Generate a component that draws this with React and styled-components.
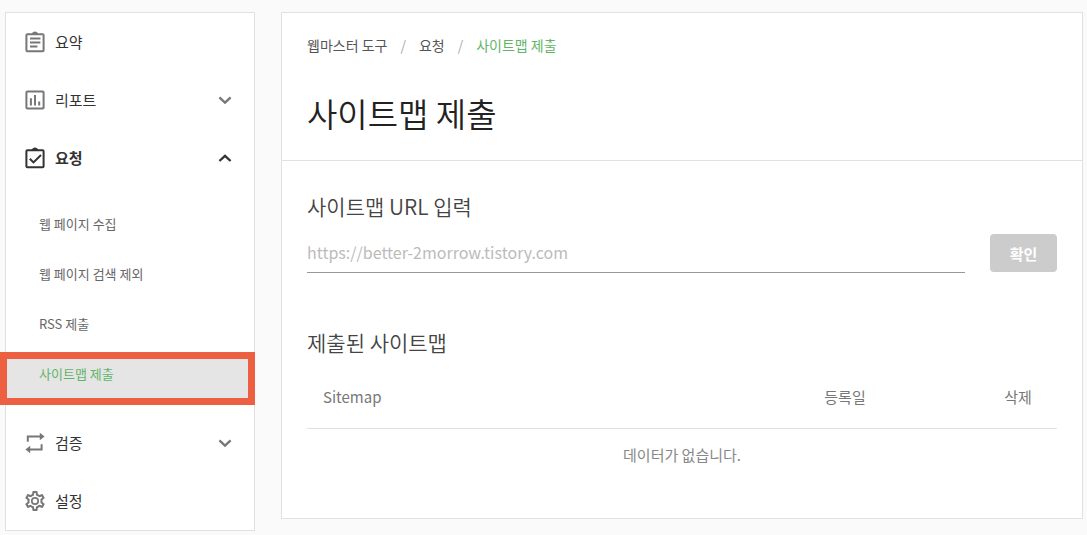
import React from "react"
import styled, { createGlobalStyle, css } from "styled-components"

const color = {
  page: "#fafafa",
  border: "#e1e1e1",
  text: "#333",
  gray: "#666",
  iconGray: "#777",
  green: "#62b565",
  red: "#ec5f40",
}

const GlobalStyle = createGlobalStyle`
  * {
    box-sizing: border-box;
  }
  body {
    margin: 0;
    background-color: ${color.page};
    color: ${color.text};
    font-family: "Noto Sans CJK KR", "Noto Sans", sans-serif;
  }
  a {
    color: inherit;
    text-decoration: none;
  }
`

const Page = styled.div`
  display: flex;
  align-items: flex-start;
  gap: 26px;
  padding: 12px 4px 3px 5px;
`

const Sidebar = styled.nav`
  flex: 0 0 250px;
  background-color: #fff;
  border: 1px solid ${color.border};
`

const List = styled.ul`
  list-style: none;
  margin: 0;
  padding: 0;
`

const SubList = styled(List)`
  padding: 11px 0 16px;
`

const menuRow = css`
  display: flex;
  align-items: center;
  gap: 10px;
  width: 100%;
  height: 58px;
  padding: 0 22px 0 19px;
  border: 0;
  background: none;
  font-family: inherit;
  font-size: 15px;
  font-weight: ${(props) => (props.$open ? 700 : 400)};
  line-height: 20px;
  color: ${color.text};
  text-align: left;
  cursor: pointer;
  svg {
    flex: none;
    color: ${(props) => (props.$open ? color.text : color.iconGray)};
  }
`

const MenuLink = styled.a`
  ${menuRow}
`

const MenuButton = styled.button`
  ${menuRow}
`

const MenuLabel = styled.span`
  flex: 1;
`

const SubLink = styled.a`
  position: relative;
  z-index: 0;
  display: flex;
  align-items: center;
  height: 50px;
  padding-left: 33px;
  font-size: 13px;
  color: ${(props) => (props.$active ? color.green : color.gray)};
  ${(props) =>
    props.$active &&
    css`
      &::before {
        content: "";
        position: absolute;
        z-index: -1;
        top: 4px;
        right: -1px;
        bottom: -7px;
        left: -6px;
        border: 7px solid ${color.red};
        background-color: #e5e5e5;
      }
    `}
`

const Main = styled.main`
  flex: 1;
  min-width: 0;
  background-color: #fff;
  border: 1px solid ${color.border};
`

const Header = styled.header`
  padding: 22px 25px 23px;
  border-bottom: 1px solid ${color.border};
`

const Breadcrumb = styled.ol`
  display: flex;
  list-style: none;
  margin: 0;
  padding: 0;
  font-size: 14px;
  line-height: 20px;
  color: #555;
  li + li::before {
    content: "/";
    padding: 0 13px;
    color: #aaa;
  }
  [aria-current] {
    color: ${color.green};
  }
`

const Title = styled.h1`
  margin: 34px 0 0;
  font-size: 33px;
  line-height: 48px;
  font-weight: 350;
  color: #222;
`

const Content = styled.div`
  padding: 30px 25px 36px;
`

const sectionTitle = css`
  display: block;
  margin: 0;
  font-size: 21px;
  line-height: 30px;
  font-weight: 350;
  color: #444;
`

const FieldLabel = styled.label`
  ${sectionTitle}
`

const SectionTitle = styled.h2`
  ${sectionTitle}
`

const Form = styled.form`
  margin-bottom: 54px;
`

const FormRow = styled.div`
  display: flex;
  gap: 25px;
  margin-top: 13px;
`

const Input = styled.input`
  flex: 1;
  min-width: 0;
  height: 39px;
  padding: 0 0 2px;
  border: 0;
  border-bottom: 1px solid #999;
  border-radius: 0;
  background: none;
  font-family: inherit;
  font-size: 16px;
  color: ${color.text};
  outline: none;
  &::placeholder {
    color: #bbb;
    opacity: 1;
  }
`

const SubmitButton = styled.button`
  width: 67px;
  height: 38px;
  padding: 0;
  border: 0;
  border-radius: 4px;
  background-color: #ccc;
  color: #fff;
  font-family: inherit;
  font-size: 15px;
  font-weight: 700;
`

const Table = styled.table`
  width: 100%;
  margin-top: 9px;
  border-collapse: collapse;
  table-layout: fixed;
  font-size: 15px;
  line-height: 20px;
  th {
    height: 62px;
    padding: 0 16px;
    border-bottom: 1px solid ${color.border};
    font-weight: 400;
    color: #777;
  }
  th:first-child {
    text-align: left;
  }
  td {
    height: 54px;
    padding: 0;
    text-align: center;
    color: #888;
  }
`

const Icon = ({ children, size = 20, height = 22 }) => (
  <svg
    width={size}
    height={height}
    viewBox={`0 0 ${size} ${height}`}
    fill="none"
    stroke="currentColor"
    strokeWidth="2"
    aria-hidden="true"
  >
    {children}
  </svg>
)

const Clipboard = () => (
  <>
    <rect x="1.4" y="3.3" width="17.2" height="16.9" rx="1" />
    <path
      d="M6.6 3.2C7.2 1.6 8.4.6 10 .6s2.8 1 3.4 2.6z"
      fill="currentColor"
      stroke="none"
    />
  </>
)

const SummaryIcon = () => (
  <Icon>
    <Clipboard />
    <path d="M5 7.5h10.4M5 11.5h10.4M5 15.5h7.4" strokeWidth="1.8" />
  </Icon>
)

const ReportIcon = () => (
  <Icon>
    <rect x="1.4" y="2.4" width="17.2" height="17.2" rx="1" />
    <path d="M5.9 9.2v7.2M10 6v10.4M14.2 12.6v3.8" />
  </Icon>
)

const RequestIcon = () => (
  <Icon>
    <Clipboard />
    <path d="M4.8 11.8l3.7 3.6L16 8" />
  </Icon>
)

const VerifyIcon = () => (
  <Icon>
    <path d="M2.8 9.7V4.5H15M16.6 12.2v5.3H5" />
    <path
      d="M14.8.8l4.8 3.7-4.8 3.7zM5.2 13.8L.4 17.5l4.8 3.7z"
      fill="currentColor"
      stroke="none"
    />
  </Icon>
)

const SettingsIcon = () => (
  <Icon>
    <path
      transform="translate(-2 -1)"
      d="M19.43 12.98c.04-.32.07-.64.07-.98 0-.34-.03-.66-.07-.98l2.11-1.65c.19-.15.24-.42.12-.64l-2-3.46a.5.5 0 0 0-.61-.22l-2.49 1c-.52-.4-1.08-.73-1.69-.98l-.38-2.65A.488.488 0 0 0 14 2h-4c-.25 0-.46.18-.49.42l-.38 2.65c-.61.25-1.17.59-1.69.98l-2.49-1a.566.566 0 0 0-.18-.03c-.17 0-.34.09-.43.25l-2 3.46c-.13.22-.07.49.12.64l2.11 1.65c-.04.32-.07.65-.07.98 0 .33.03.66.07.98l-2.11 1.65c-.19.15-.24.42-.12.64l2 3.46a.5.5 0 0 0 .61.22l2.49-1c.52.4 1.08.73 1.69.98l.38 2.65c.03.24.24.42.49.42h4c.25 0 .46-.18.49-.42l.38-2.65c.61-.25 1.17-.59 1.69-.98l2.49 1c.06.02.12.03.18.03.17 0 .34-.09.43-.25l2-3.46c.12-.22.07-.49-.12-.64l-2.11-1.65zm-1.98-1.71c.04.31.05.52.05.73 0 .21-.02.43-.05.73l-.14 1.13.89.7 1.08.84-.7 1.21-1.27-.51-1.04-.42-.9.68c-.43.32-.84.56-1.25.73l-1.06.43-.16 1.13-.2 1.35h-1.4l-.19-1.35-.16-1.13-1.06-.43c-.43-.18-.83-.41-1.23-.71l-.91-.7-1.06.43-1.27.51-.7-1.21 1.08-.84.89-.7-.14-1.13c-.03-.31-.05-.54-.05-.74s.02-.43.05-.73l.14-1.13-.89-.7-1.08-.84.7-1.21 1.27.51 1.04.42.9-.68c.43-.32.84-.56 1.25-.73l1.06-.43.16-1.13.2-1.35h1.39l.19 1.35.16 1.13 1.06.43c.43.18.83.41 1.23.71l.91.7 1.06-.43 1.27-.51.7 1.21-1.07.85-.89.7.14 1.13z"
      fill="currentColor"
      stroke="none"
    />
    <circle cx="10" cy="11" r="3.2" strokeWidth="1.7" />
  </Icon>
)

const Chevron = ({ up }) => (
  <Icon size={14} height={14}>
    <path
      d={up ? "M1.4 10L7 4.8l5.6 5.2" : "M1.4 4.4L7 9.6l5.6-5.2"}
      strokeWidth="2.3"
    />
  </Icon>
)

const requestPages = [
  "웹 페이지 수집",
  "웹 페이지 검색 제외",
  "RSS 제출",
  "사이트맵 제출",
]

const current = "사이트맵 제출"

const App = () => {
  return (
    <>
      <GlobalStyle />
      <Page>
        <Sidebar>
          <List>
            <li>
              <MenuLink href="#">
                <SummaryIcon />
                <MenuLabel>요약</MenuLabel>
              </MenuLink>
            </li>
            <li>
              <MenuButton type="button" aria-expanded="false">
                <ReportIcon />
                <MenuLabel>리포트</MenuLabel>
                <Chevron />
              </MenuButton>
            </li>
            <li>
              <MenuButton type="button" aria-expanded="true" $open>
                <RequestIcon />
                <MenuLabel>요청</MenuLabel>
                <Chevron up />
              </MenuButton>
              <SubList>
                {requestPages.map((page) => (
                  <li key={page}>
                    <SubLink href="#" $active={page === current}>
                      {page}
                    </SubLink>
                  </li>
                ))}
              </SubList>
            </li>
            <li>
              <MenuButton type="button" aria-expanded="false">
                <VerifyIcon />
                <MenuLabel>검증</MenuLabel>
                <Chevron />
              </MenuButton>
            </li>
            <li>
              <MenuLink href="#">
                <SettingsIcon />
                <MenuLabel>설정</MenuLabel>
              </MenuLink>
            </li>
          </List>
        </Sidebar>
        <Main>
          <Header>
            <Breadcrumb>
              <li>
                <a href="#">웹마스터 도구</a>
              </li>
              <li>
                <a href="#">요청</a>
              </li>
              <li>
                <a href="#" aria-current="page">
                  {current}
                </a>
              </li>
            </Breadcrumb>
            <Title>{current}</Title>
          </Header>
          <Content>
            <Form onSubmit={(e) => e.preventDefault()}>
              <FieldLabel htmlFor="sitemap-url">사이트맵 URL 입력</FieldLabel>
              <FormRow>
                <Input
                  id="sitemap-url"
                  type="text"
                  placeholder="https://better-2morrow.tistory.com"
                />
                <SubmitButton type="submit" disabled>
                  확인
                </SubmitButton>
              </FormRow>
            </Form>
            <SectionTitle>제출된 사이트맵</SectionTitle>
            <Table>
              <colgroup>
                <col />
                <col width="268" />
                <col width="78" />
              </colgroup>
              <thead>
                <tr>
                  <th scope="col">Sitemap</th>
                  <th scope="col">등록일</th>
                  <th scope="col">삭제</th>
                </tr>
              </thead>
              <tbody>
                <tr>
                  <td colSpan="3">데이터가 없습니다.</td>
                </tr>
              </tbody>
            </Table>
          </Content>
        </Main>
      </Page>
    </>
  )
}

export default App
